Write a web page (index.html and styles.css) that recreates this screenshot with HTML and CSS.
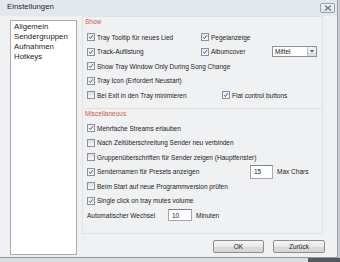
FILE: index.html
```html
<!DOCTYPE html>
<html lang="de">
<head>
    <meta charset="UTF-8">
    <meta name="viewport" content="width=device-width, initial-scale=1.0">
    <title>Einstellungen</title>
    <link rel="stylesheet" href="styles.css">
</head>
<body>
    <div class="window">
        <div class="titlebar">
            <span class="title">Einstellungen</span>
            <span class="close-btn">
                <svg width="8" height="6" viewBox="0 0 8 6"><path d="M1 0.5 L7 5.5 M7 0.5 L1 5.5" stroke="#6d7480" stroke-width="1.3" fill="none"/></svg>
            </span>
        </div>
        <div class="client">
            <ul class="nav-list">
                <li>Allgemein</li>
                <li>Sendergruppen</li>
                <li>Aufnahmen</li>
                <li>Hotkeys</li>
            </ul>
            <div class="main">
                <div class="panel">
                    <div class="section">
                        <div class="section-title">Show</div>
                        <div class="rows">
                            <div class="row">
                                <label class="check w-col1"><span class="box checked"><svg viewBox="0 0 8 8"><path d="M1.4 4.2 L3.2 6.1 L6.6 1.6"/></svg></span>Tray Tooltip für neues Lied</label>
                                <label class="check"><span class="box checked"><svg viewBox="0 0 8 8"><path d="M1.4 4.2 L3.2 6.1 L6.6 1.6"/></svg></span>Pegelanzeige</label>
                            </div>
                            <div class="row">
                                <label class="check w-col1"><span class="box checked"><svg viewBox="0 0 8 8"><path d="M1.4 4.2 L3.2 6.1 L6.6 1.6"/></svg></span>Track-Auflistung</label>
                                <label class="check w-album"><span class="box checked"><svg viewBox="0 0 8 8"><path d="M1.4 4.2 L3.2 6.1 L6.6 1.6"/></svg></span>Albumcover</label>
                                <span class="select"><span class="select-value">Mittel</span><span class="select-arrow"><svg width="4" height="3" viewBox="0 0 4 3"><path d="M0 0 H4 L2 2.5 Z" fill="#4d5563"/></svg></span></span>
                            </div>
                            <div class="row">
                                <label class="check"><span class="box checked"><svg viewBox="0 0 8 8"><path d="M1.4 4.2 L3.2 6.1 L6.6 1.6"/></svg></span>Show Tray Window Only During Song Change</label>
                            </div>
                            <div class="row">
                                <label class="check"><span class="box checked"><svg viewBox="0 0 8 8"><path d="M1.4 4.2 L3.2 6.1 L6.6 1.6"/></svg></span>Tray Icon (Erfordert Neustart)</label>
                            </div>
                            <div class="row">
                                <label class="check w-exit"><span class="box"></span>Bei Exit in den Tray minimieren</label>
                                <label class="check"><span class="box checked"><svg viewBox="0 0 8 8"><path d="M1.4 4.2 L3.2 6.1 L6.6 1.6"/></svg></span>Flat control buttons</label>
                            </div>
                        </div>
                    </div>

                    <div class="section misc">
                        <div class="section-title">Miscellaneous</div>
                        <div class="rows">
                            <div class="row">
                                <label class="check"><span class="box checked"><svg viewBox="0 0 8 8"><path d="M1.4 4.2 L3.2 6.1 L6.6 1.6"/></svg></span>Mehrfache Streams erlauben</label>
                            </div>
                            <div class="row">
                                <label class="check"><span class="box"></span>Nach Zeitüberschreitung Sender neu verbinden</label>
                            </div>
                            <div class="row">
                                <label class="check"><span class="box"></span>Gruppenüberschriften für Sender zeigen (Hauptfenster)</label>
                            </div>
                            <div class="row">
                                <label class="check w-presets"><span class="box checked"><svg viewBox="0 0 8 8"><path d="M1.4 4.2 L3.2 6.1 L6.6 1.6"/></svg></span>Sendernamen für Presets anzeigen</label>
                                <span class="text-input chars">15</span>
                                <span class="unit">Max Chars</span>
                            </div>
                            <div class="row">
                                <label class="check"><span class="box"></span>Beim Start auf neue Programmversion prüfen</label>
                            </div>
                            <div class="row">
                                <label class="check"><span class="box checked"><svg viewBox="0 0 8 8"><path d="M1.4 4.2 L3.2 6.1 L6.6 1.6"/></svg></span>Single click on tray mutes volume</label>
                            </div>
                            <div class="row">
                                <span class="plain-label">Automatischer Wechsel</span>
                                <span class="text-input minutes">10</span>
                                <span class="unit">Minuten</span>
                            </div>
                        </div>
                    </div>
                </div>

                <div class="button-group">
                    <button class="btn">OK</button>
                    <button class="btn">Zurück</button>
                </div>
            </div>
        </div>
    </div>
    <div class="desktop">
        <div class="desktop-dark"></div>
    </div>
</body>
</html>
```

FILE: styles.css
```css
body {
    margin: 0;
    padding: 0;
    width: 340px;
    height: 262px;
    overflow: hidden;
    background-color: #c9ccd0;
    font-family: 'Liberation Sans', Arial, sans-serif;
    color: #222;
}
.window {
    width: 337px;
    height: 257px;
    background-color: #eef0f3;
    border-right: 1px solid #9ba1a9;
    border-bottom: 1px solid #8f959d;
    display: flex;
    flex-direction: column;
}
.titlebar {
    height: 16px;
    flex: none;
    display: flex;
    align-items: flex-start;
    justify-content: space-between;
    background-color: #e3e8ef;
}
.title {
    font-size: 7.8px;
    line-height: 14px;
    padding-left: 7px;
    color: #1e2430;
}
.close-btn {
    width: 13px;
    height: 8px;
    margin: 3px 2px 0 0;
    border: 1px solid #98a1ad;
    border-radius: 2px;
    background: linear-gradient(#f4f6f9, #dfe4ea);
    display: flex;
    align-items: center;
    justify-content: center;
}
.client {
    flex: 1;
    display: flex;
    padding-left: 10px;
    background-color: #f0f1f3;
}
.nav-list {
    list-style: none;
    margin: 4px 0 0 0;
    padding: 1px 3px;
    width: 59px;
    height: 231px;
    background-color: #fff;
    border: 1px solid #a9aeb6;
    font-size: 7.8px;
    line-height: 10px;
    color: #1d1d1d;
}
.main {
    margin-left: 5px;
    width: 243px;
    display: flex;
    flex-direction: column;
}
.panel {
    width: 239px;
    height: 216px;
    border: 1px solid #e1e2e4;
    font-size: 6.5px;
}
.section-title {
    height: 10px;
    line-height: 10px;
    padding-left: 2px;
    color: #cc5a45;
}
.rows {
    margin-top: 3px;
}
.misc {
    margin: 5.5px 1px 0 1px;
    border-top: 1px solid #dcdddf;
}
.misc .section-title {
    padding-left: 1px;
}
.misc .rows {
    margin-top: 1.75px;
}
.row {
    height: 14.5px;
    display: flex;
    align-items: center;
    padding-left: 4px;
}
.misc .row {
    padding-left: 3px;
}
.check {
    display: flex;
    align-items: center;
    white-space: nowrap;
    flex: none;
}
.w-col1 {
    width: 114px;
}
.w-album {
    width: 71px;
}
.w-exit {
    width: 135px;
}
.w-presets {
    width: 163px;
}
.box {
    width: 6px;
    height: 6px;
    margin-right: 2px;
    border: 1px solid #8e9196;
    background: linear-gradient(#dcdde0, #fafafa);
    display: flex;
    flex: none;
}
.box.checked {
    background: linear-gradient(#e6ebf3, #fbfcfe);
}
.box svg {
    width: 6px;
    height: 6px;
}
.box svg path {
    fill: none;
    stroke: #3c4f8c;
    stroke-width: 1.3;
}
.select {
    width: 43px;
    height: 9px;
    border: 1px solid #8c929a;
    background-color: #fff;
    display: flex;
    justify-content: space-between;
}
.select-value {
    padding-left: 2px;
    line-height: 9px;
}
.select-arrow {
    width: 8px;
    border-left: 1px solid #b8bec6;
    background: linear-gradient(#f1f3f6, #d9dde3);
    display: flex;
    align-items: center;
    justify-content: center;
}
.text-input {
    background-color: #fff;
    border: 1px solid #a3a6ab;
    border-top-color: #7f8389;
    padding-left: 3px;
    box-sizing: border-box;
    display: flex;
    align-items: center;
}
.chars {
    width: 23px;
    height: 14px;
}
.minutes {
    width: 24px;
    height: 12px;
}
.unit {
    margin-left: 4px;
}
.plain-label {
    width: 81px;
    flex: none;
}
.button-group {
    display: flex;
    justify-content: flex-end;
    gap: 9px;
    margin-top: 6px;
}
.btn {
    width: 51px;
    height: 13px;
    padding: 0;
    border: 1px solid #8a8d92;
    border-radius: 2px;
    background: linear-gradient(#f6f6f6 0%, #e8e8e8 50%, #dcdcdc 51%, #d6d6d6 100%);
    font-family: 'Liberation Sans', Arial, sans-serif;
    font-size: 6.5px;
    color: #222;
}
.btn + .btn {
    width: 52px;
}
.desktop {
    height: 4px;
    display: flex;
    justify-content: flex-end;
    background-color: #dcdee1;
}
.desktop-dark {
    width: 32px;
    background-color: #55585c;
}
```
